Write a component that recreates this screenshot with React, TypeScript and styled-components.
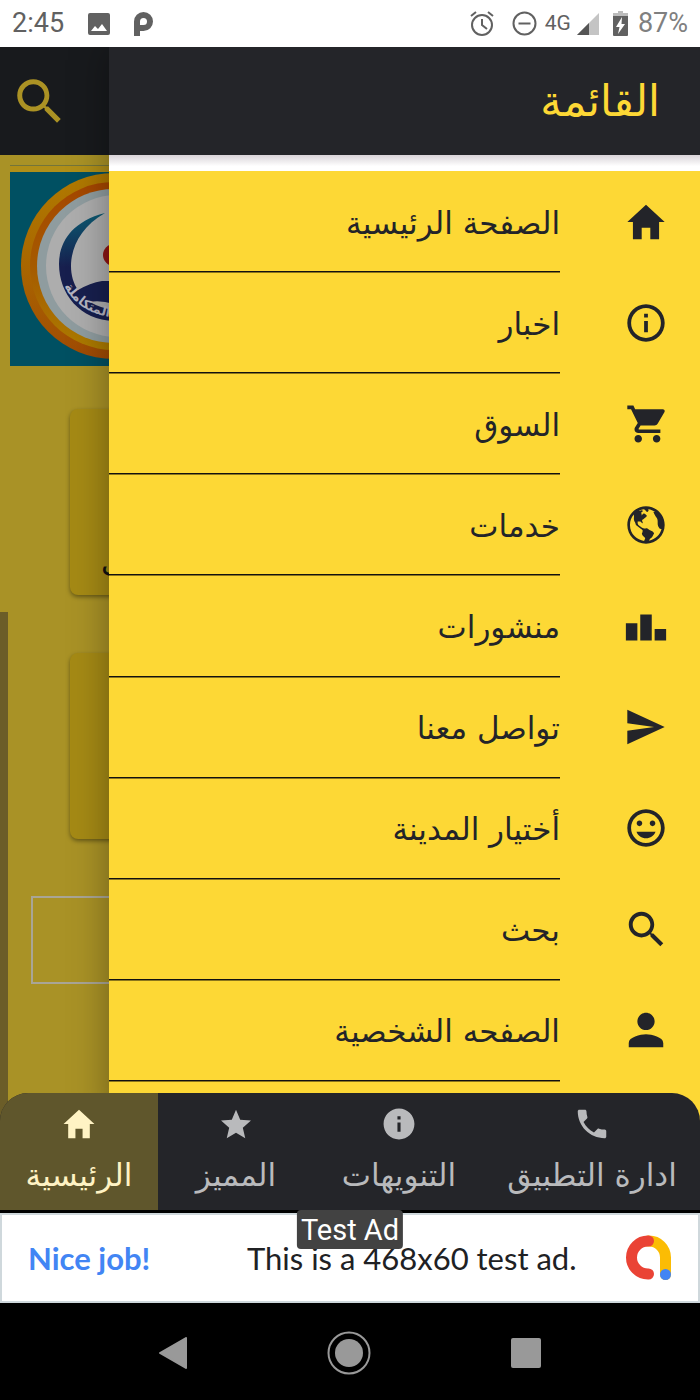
import React from "react";
import styled, { createGlobalStyle } from "styled-components";
import {
  IoMdHome, IoMdInformationCircleOutline, IoMdCart, IoMdGlobe, IoMdPodium, IoMdSend,
  IoMdHappy, IoMdSearch, IoMdPerson, IoMdStar, IoMdInformationCircle, IoMdCall,
} from "react-icons/io";
import type { IconType } from "react-icons";

const arabic = `"DejaVu Sans", sans-serif`;

const GlobalStyle = createGlobalStyle`
  *, *::before, *::after { box-sizing: border-box; }
  body { margin: 0; background: #000; font-family: ${arabic}; }
  button { border: 0; padding: 0; background: none; font: inherit; color: inherit; cursor: pointer; }
  a { color: inherit; text-decoration: none; }
  svg { display: block; flex: none; }
`;

const Screen = styled.div`
  display: flex;
  flex-direction: column;
  min-height: 100vh;
  overflow: hidden;
`;

const StatusBar = styled.header`
  display: flex;
  align-items: center;
  justify-content: space-between;
  height: 47px;
  padding: 0 12px;
  background: #fff;
  color: #616161;
  font: 27px/47px Roboto, sans-serif;
`;

const StatusGroup = styled.div<{ $gap: number }>`
  display: flex;
  align-items: center;
  gap: ${(p) => p.$gap}px;
`;

const Network = styled.span`
  display: flex;
  align-items: center;
  gap: 6px;
  padding-right: 6px;
  font-size: 21px;
`;

const Percent = styled.span`
  color: #808080;
`;

const Stage = styled.div`
  display: grid;
  overflow: hidden;
`;

const Page = styled.div`
  grid-area: 1 / 1;
  position: relative;
  display: flex;
  flex-direction: column;
  background: #a99226;
`;

const PageHeader = styled.div`
  display: flex;
  align-items: center;
  height: 108px;
  padding-left: 10px;
  background: #181a1d;
  color: #ab9224;
`;

const PageContent = styled.div`
  display: flex;
  flex-direction: column;
  padding: 10px 10px 0;
`;

const Banner = styled.div`
  border-top: 1px solid #74753a;
  padding-top: 6px;
  background: #b08f18;
`;

const Cards = styled.div`
  display: flex;
  flex-direction: column;
  gap: 58px;
  padding: 43px 60px 57px;
`;

const Card = styled.div`
  display: flex;
  align-items: flex-end;
  height: 186px;
  padding: 0 31px 10px;
  border-radius: 8px;
  background: #a58a15;
  box-shadow: 0 2px 4px rgba(0, 0, 0, 0.4);
  color: #111;
  font-size: 31px;
  line-height: 40px;
`;

const Outline = styled.div`
  height: 88px;
  margin: 0 21px;
  border: 2px solid #a9a596;
`;

const ScrollThumb = styled.div`
  position: absolute;
  left: 0;
  top: 565px;
  bottom: 0;
  width: 8px;
  background: #6b5d28;
`;

const Drawer = styled.aside`
  grid-area: 1 / 1;
  z-index: 1;
  justify-self: end;
  display: flex;
  flex-direction: column;
  width: 84.4%;
  padding-bottom: 40px;
  background: #fdd835;
  box-shadow: 0 0 36px rgba(0, 0, 0, 0.35);
`;

const DrawerHeader = styled.div`
  display: flex;
  align-items: center;
  height: 108px;
  padding: 0 40px;
  background: #242529;
  color: #fdd835;
`;

const DrawerTitle = styled.h1`
  margin: 0;
  font-size: 43px;
  font-weight: 400;
  line-height: 56px;
`;

const DrawerEdge = styled.div`
  height: 16px;
  background: linear-gradient(#d9d4d8, #fff 70%);
`;

const Menu = styled.ul`
  display: grid;
  grid-auto-rows: 1fr;
  min-height: 910px;
  margin: 0;
  padding: 0;
  list-style: none;
`;

const MenuItem = styled.li`
  display: flex;
`;

const MenuLink = styled.a`
  display: flex;
  flex: 1;
  align-items: stretch;
  color: #232429;
`;

const MenuIcon = styled.span`
  display: flex;
  align-items: center;
  justify-content: center;
  width: 140px;
  padding: 0 31px 0 63px;
`;

const MenuLabel = styled.span`
  display: flex;
  align-items: center;
  flex: 1;
  padding-top: 3px;
  border-bottom: 1px solid #111;
  box-shadow: 0 1px rgba(0, 0, 0, 0.45);
  font-size: 31px;
  line-height: 40px;
`;

const Tabs = styled.nav`
  position: relative;
  z-index: 2;
  display: flex;
  height: 117px;
  margin-top: -28px;
  border-radius: 28px 28px 0 0;
  overflow: hidden;
  background: #242529;
`;

const Tab = styled.button<{ $active?: boolean; $grow: number }>`
  display: flex;
  flex: ${(p) => p.$grow} 1 0;
  flex-direction: column;
  align-items: center;
  gap: 10px;
  padding-top: 12px;
  background: ${(p) => (p.$active ? "#5f562c" : "transparent")};
  color: ${(p) => (p.$active ? "#fff3c4" : "#b9babc")};
  font-size: 31px;
  line-height: 44px;
  white-space: nowrap;
`;

const Ad = styled.a`
  position: relative;
  display: flex;
  align-items: center;
  height: 90px;
  margin-top: 3px;
  padding: 0 26px;
  border: 2px solid #cfd8dc;
  background: #fff;
  color: #202124;
  font: 31px/40px Lato, sans-serif;
`;

const AdLead = styled.strong`
  flex: 0 0 219px;
  color: #4285f4;
  font-weight: 700;
`;

const AdCopy = styled.span`
  flex: 1;
`;

const AdBadge = styled.span`
  position: absolute;
  top: -5px;
  left: 50%;
  transform: translateX(-50%);
  padding: 2px 4px 0;
  border-radius: 4px;
  background: #424242;
  color: #fff;
  font: 29px/37px Roboto, sans-serif;
  white-space: nowrap;
`;

const SystemNav = styled.footer`
  display: flex;
  flex: 1;
  align-items: center;
  justify-content: center;
  gap: 140px;
  min-height: 97px;
  padding-top: 3px;
  background: #000;
`;

const menu: { label: string; icon: IconType }[] = [
  { label: "الصفحة الرئيسية", icon: IoMdHome },
  { label: "اخبار", icon: IoMdInformationCircleOutline },
  { label: "السوق", icon: IoMdCart },
  { label: "خدمات", icon: IoMdGlobe },
  { label: "منشورات", icon: IoMdPodium },
  { label: "تواصل معنا", icon: IoMdSend },
  { label: "أختيار المدينة", icon: IoMdHappy },
  { label: "بحث", icon: IoMdSearch },
  { label: "الصفحه الشخصية", icon: IoMdPerson },
];

const tabs: { label: string; icon: IconType; grow: number; active?: boolean }[] = [
  { label: "ادارة التطبيق", icon: IoMdCall, grow: 216 },
  { label: "التنويهات", icon: IoMdInformationCircle, grow: 170 },
  { label: "المميز", icon: IoMdStar, grow: 156 },
  { label: "الرئيسية", icon: IoMdHome, grow: 158, active: true },
];

const PhotoIcon = () => (
  <svg width="22" height="22" viewBox="0 0 22 22" fill="#616161">
    <path fillRule="evenodd" d="M2 0h18a2 2 0 0 1 2 2v18a2 2 0 0 1-2 2H2a2 2 0 0 1-2-2V2a2 2 0 0 1 2-2zM3 18h16l-5-7-4 5-3-3z" />
  </svg>
);

const ParkingIcon = () => (
  <svg width="19" height="24" viewBox="0 0 19 24" fill="#616161">
    <path fillRule="evenodd" d="M0 24V9.500A9.500 9.500 0 1 1 9.500 19H6v5zM6 13h3.500A3.500 3.500 0 1 0 6 9.500z" />
  </svg>
);

const AlarmIcon = () => (
  <svg width="24" height="25" viewBox="0 0 24 25" fill="none" stroke="#616161" strokeWidth="2">
    <circle cx="12" cy="14" r="10" />
    <path d="M12 8v6l5 4M1 5l5-4M23 5l-5-4" />
  </svg>
);

const DoNotDisturbIcon = () => (
  <svg width="25" height="25" viewBox="0 0 25 25" fill="none" stroke="#616161" strokeWidth="2">
    <circle cx="12.500" cy="12.500" r="11" />
    <path d="M6.500 12.500h12" />
  </svg>
);

const SignalIcon = () => (
  <svg width="22" height="22" viewBox="0 0 22 22">
    <path d="M22 0v22H0z" fill="#c4c4c4" />
    <path d="M12 10v12H0z" fill="#555" />
  </svg>
);

const BatteryIcon = () => (
  <svg width="15" height="25" viewBox="0 0 15 25">
    <path d="M5 0h5v2h5v4H0V2h5z" fill="#bcbcbc" />
    <path d="M0 5h15v19a1 1 0 0 1-1 1H1a1 1 0 0 1-1-1z" fill="#616161" />
    <path d="M9 6L3 16h3.500L5 23l7-10H8.500z" fill="#fff" />
  </svg>
);

const BannerArt = () => (
  <svg width="196" height="194" viewBox="0 0 196 194" role="img" aria-label="المتكاملة">
    <defs>
      <linearGradient id="swoosh" x1="0" y1="0" x2="0" y2="1">
        <stop offset="0" stopColor="#0c5a72" />
        <stop offset="0.5" stopColor="#171f4e" />
      </linearGradient>
      <linearGradient id="outerRing" x1="0" y1="0" x2="0" y2="1">
        <stop offset="0" stopColor="#b07a00" />
        <stop offset="0.5" stopColor="#a96600" />
        <stop offset="1" stopColor="#a04a04" />
      </linearGradient>
      <linearGradient id="innerRing" x1="0" y1="0" x2="0" y2="1">
        <stop offset="0" stopColor="#a54600" />
        <stop offset="0.5" stopColor="#a55a00" />
        <stop offset="1" stopColor="#ac7c00" />
      </linearGradient>
      <path id="arc" d="M54 114Q70 143 108 146" />
    </defs>
    <path d="M0 0h196v194H0z" fill="#005062" />
    <circle cx="104" cy="94" r="93" fill="url(#outerRing)" />
    <circle cx="104" cy="94" r="84" fill="url(#innerRing)" />
    <circle cx="104" cy="94" r="77" fill="#8f9c9f" />
    <circle cx="107" cy="94" r="71" fill="#adadad" />
    <path d="M95 41C60 50 49 72 49 92C49 122 70 148 104 149V109H92Q80 111 68 118C55 100 58 62 95 41z" fill="url(#swoosh)" />
    <circle cx="104" cy="83" r="11" fill="#8c1414" />
    <path d="M80 130Q90 128 104 132V138Q90 136 80 130z" fill="#adadad" />
    <text fill="#b4b4c0" fontSize="13" fontWeight="700" fontFamily={arabic}>
      <textPath href="#arc">المتكاملة</textPath>
    </text>
  </svg>
);

const AdMobLogo = () => (
  <svg width="46" height="46" viewBox="0 0 46 46" fill="none" strokeWidth="11" strokeLinecap="round">
    <path d="M22 6H23A16.500 16.500 0 0 1 39.500 22.500V39.500" stroke="#fbbc04" />
    <path d="M22.500 6H22A16.500 16.500 0 0 0 22 39H22.500" stroke="#ea4335" />
    <circle cx="39.500" cy="39.500" r="5.500" fill="#4285f4" />
  </svg>
);

export default function App() {
  return (
    <Screen>
      <GlobalStyle />
      <StatusBar>
        <StatusGroup $gap={24}>
          <span>2:45</span>
          <PhotoIcon />
          <ParkingIcon />
        </StatusGroup>
        <StatusGroup $gap={8}>
          <StatusGroup $gap={18}>
            <AlarmIcon />
            <DoNotDisturbIcon />
          </StatusGroup>
          <Network>4G<SignalIcon /></Network>
          <StatusGroup $gap={10}>
            <BatteryIcon />
            <Percent>87%</Percent>
          </StatusGroup>
        </StatusGroup>
      </StatusBar>

      <Stage>
        <Page>
          <PageHeader>
            <button aria-label="بحث"><IoMdSearch size={58} /></button>
          </PageHeader>
          <PageContent>
            <Banner><BannerArt /></Banner>
            <Cards>
              <Card>ت</Card>
              <Card />
            </Cards>
            <Outline />
          </PageContent>
          <ScrollThumb />
        </Page>

        <Drawer dir="rtl">
          <DrawerHeader><DrawerTitle>القائمة</DrawerTitle></DrawerHeader>
          <DrawerEdge />
          <Menu>
            {menu.map(({ label, icon: Icon }) => (
              <MenuItem key={label}>
                <MenuLink href="#">
                  <MenuIcon><Icon size={46} /></MenuIcon>
                  <MenuLabel>{label}</MenuLabel>
                </MenuLink>
              </MenuItem>
            ))}
          </Menu>
        </Drawer>
      </Stage>

      <Tabs dir="rtl">
        {tabs.map(({ label, icon: Icon, grow, active }) => (
          <Tab key={label} $grow={grow} $active={active}>
            <Icon size={38} />
            {label}
          </Tab>
        ))}
      </Tabs>

      <Ad href="#">
        <AdLead>Nice job!</AdLead>
        <AdCopy>This is a 468x60 test ad.</AdCopy>
        <AdMobLogo />
        <AdBadge>Test Ad</AdBadge>
      </Ad>

      <SystemNav>
        <button aria-label="Back">
          <svg width="28" height="32" viewBox="0 0 28 32"><path d="M27 1v30L1 16z" fill="#999" stroke="#999" strokeWidth="2" strokeLinejoin="round" /></svg>
        </button>
        <button aria-label="Home">
          <svg width="44" height="44" viewBox="0 0 44 44"><circle cx="22" cy="22" r="20.500" fill="none" stroke="#999" strokeWidth="2" /><circle cx="22" cy="22" r="14" fill="#999" /></svg>
        </button>
        <button aria-label="Recent apps">
          <svg width="30" height="30" viewBox="0 0 30 30"><rect width="30" height="30" rx="2" fill="#999" /></svg>
        </button>
      </SystemNav>
    </Screen>
  );
}
